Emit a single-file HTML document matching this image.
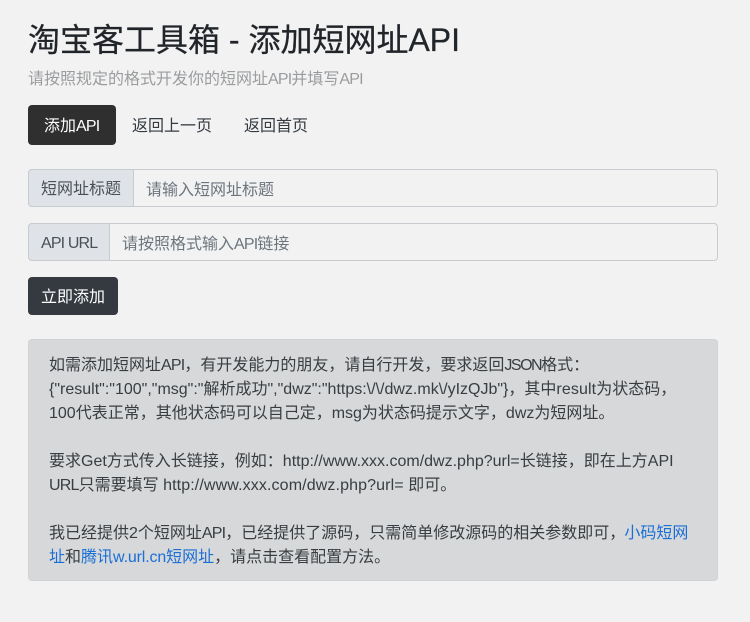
<!DOCTYPE html>
<html lang="zh-CN">
<head>
<meta charset="utf-8">
<title>淘宝客工具箱 - 添加短网址API</title>
<style>
html,body{margin:0;padding:0;background:#f2f2f2;}
body{width:750px;height:622px;position:relative;overflow:hidden;font-family:"Liberation Sans","Noto Sans CJK SC",sans-serif;font-size:16px;color:#212529;}
.a{position:absolute;white-space:nowrap;}
.box{position:absolute;box-sizing:border-box;}
.l{position:absolute;left:49px;white-space:nowrap;line-height:24px;height:24px;color:#383d41;font-size:16px;}
a{color:#1b6ed6;text-decoration:none;}
.n{letter-spacing:-.8px;}
.w{letter-spacing:.12px;}
</style>
</head>
<body>
<div class="a" style="left:28px;top:16px;font-size:32px;line-height:48px;color:#212529;-webkit-text-stroke:.25px #212529;">淘宝客工具箱 - 添加短网址API</div>
<div class="a" style="left:28px;top:68px;line-height:24px;color:#9a9c9e;">请按照规定的格式开发你的短网址<span class="n">API</span>并填写<span class="n">API</span></div>

<div class="box" style="left:28px;top:105px;width:88px;height:40px;background:#2f2f2f;border-radius:4px;"></div>
<div class="a" style="left:44px;top:115px;line-height:24px;color:#fff;">添加<span class="n">API</span></div>
<div class="a" style="left:132px;top:115px;line-height:24px;color:#343a40;">返回上一页</div>
<div class="a" style="left:244px;top:115px;line-height:24px;color:#343a40;">返回首页</div>

<div class="box" style="left:28px;top:169px;width:690px;height:38px;border:1px solid #c8ccd1;border-radius:4px;background:#f2f2f2;"></div>
<div class="box" style="left:28px;top:169px;width:106px;height:38px;border:1px solid #c8ccd1;border-radius:4px 0 0 4px;background:#dfe2e6;"></div>
<div class="a" style="left:41px;top:178px;line-height:24px;color:#495057;">短网址标题</div>
<div class="a" style="left:146px;top:179px;line-height:24px;color:#6c757d;">请输入短网址标题</div>

<div class="box" style="left:28px;top:223px;width:690px;height:38px;border:1px solid #c8ccd1;border-radius:4px;background:#f2f2f2;"></div>
<div class="box" style="left:28px;top:223px;width:82px;height:38px;border:1px solid #c8ccd1;border-radius:4px 0 0 4px;background:#dfe2e6;"></div>
<div class="a" style="left:41px;top:232px;line-height:24px;color:#495057;letter-spacing:-.85px;">API URL</div>
<div class="a" style="left:122px;top:233px;line-height:24px;color:#6c757d;">请按照格式输入<span class="n">API</span>链接</div>

<div class="box" style="left:28px;top:277px;width:90px;height:38px;background:#343a40;border-radius:4px;"></div>
<div class="a" style="left:41px;top:286px;line-height:24px;color:#fff;">立即添加</div>

<div class="box" style="left:28px;top:339px;width:690px;height:242px;background:#d6d8d9;border:1px solid #d0d2d4;border-radius:4px;"></div>
<div class="l" style="top:354px;">如需添加短网址<span class="n">API</span>，有开发能力的朋友，请自行开发，要求返回<span style="letter-spacing:-1.5px;">JSON</span>格式：</div>
<div class="l" style="top:378px;">{"result":"100","msg":"解析成功","dwz":"https:\/\/dwz.mk\/yIzQJb"}，其中<span class="w">result</span>为状态码，</div>
<div class="l" style="top:402px;">100代表正常，其他状态码可以自己定，msg为状态码提示文字，dwz为短网址。</div>
<div class="l" style="top:450px;">要求Get方式传入长链接，例如：http://www.xxx.com/dwz.php?url=长链接，即在上方API</div>
<div class="l" style="top:474px;"><span class="n">URL</span>只需要填写 <span class="w">http://www.xxx.com/dwz.php?url=</span> 即可。</div>
<div class="l" style="top:522px;">我已经提供2个短网址<span class="n">API</span>，已经提供了源码，只需简单修改源码的相关参数即可，<a href="#" style="margin-left:-1px;">小码短网</a></div>
<div class="l" style="top:546px;"><a href="#">址</a>和<a href="#">腾讯<span style="letter-spacing:-.15px;">w.url.cn</span>短网址</a>，请点击查看配置方法。</div>
</body>
</html>
